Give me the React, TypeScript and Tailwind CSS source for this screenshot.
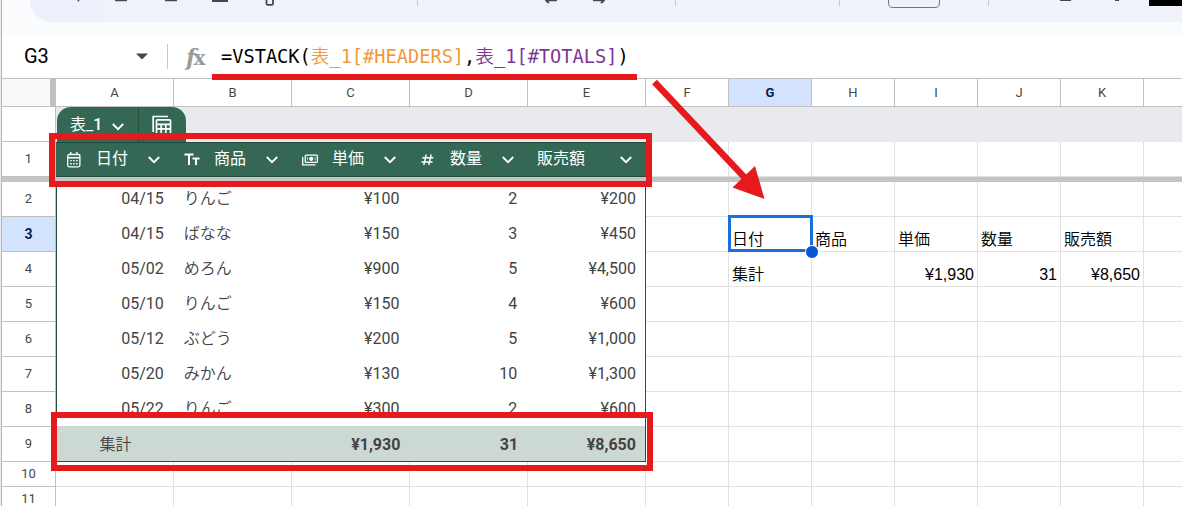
import type { ReactNode } from 'react'
import clsx from 'clsx'

type IconName = 'date' | 'text' | 'currency' | 'number'

interface HeaderColumn {
  label: string
  icon?: IconName
}

const tableHeaders: HeaderColumn[] = [
  { label: '日付', icon: 'date' },
  { label: '商品', icon: 'text' },
  { label: '単価', icon: 'currency' },
  { label: '数量', icon: 'number' },
  { label: '販売額' },
]

const tableRows = [
  ['04/15', 'りんご', '¥100', '2', '¥200'],
  ['04/15', 'ばなな', '¥150', '3', '¥450'],
  ['05/02', 'めろん', '¥900', '5', '¥4,500'],
  ['05/10', 'りんご', '¥150', '4', '¥600'],
  ['05/12', 'ぶどう', '¥200', '5', '¥1,000'],
  ['05/20', 'みかん', '¥130', '10', '¥1,300'],
  ['05/22', 'りんご', '¥300', '2', '¥600'],
]

const totals = ['集計', '', '¥1,930', '31', '¥8,650']

const wideColumns = ['A', 'B', 'C', 'D', 'E']
const narrowColumns = ['F', 'G', 'H', 'I', 'J', 'K']

// Spilled VSTACK result, keyed by row number, columns F to K
const results: Record<number, string[]> = {
  3: ['', '日付', '商品', '単価', '数量', '販売額'],
  4: ['', '集計', '', '¥1,930', '31', '¥8,650'],
}

function Chevron({ className }: { className?: string }) {
  return (
    <svg className={clsx('h-2 w-3 shrink-0', className)} viewBox="0 0 12 8" fill="none" stroke="currentColor" strokeWidth="1.8">
      <path d="M0.8 1L6 6.2L11.2 1" />
    </svg>
  )
}

function ColumnIcon({ name }: { name: IconName }) {
  if (name === 'date') {
    return (
      <svg className="h-4 w-[18px]" viewBox="0 0 18 16" fill="none" stroke="currentColor">
        <rect x="1.7" y="2.5" width="12.2" height="12.3" rx="1.5" strokeWidth="1.3" />
        <path d="M4.7 0V2.5M11 0V2.5M2 5.7H14" strokeWidth="1.4" />
        <path d="M4.2 8.6H12M4.2 11.7H12" strokeWidth="1.4" strokeDasharray="1.6 1.3" />
      </svg>
    )
  }
  if (name === 'text') {
    return (
      <svg className="h-4 w-[18px]" viewBox="0 0 18 16" fill="none" stroke="currentColor" strokeWidth="2">
        <path d="M0.5 2.5H9.5M5 2.5V13" />
        <path d="M8.5 6.5H15.5M12 6.5V13" />
      </svg>
    )
  }
  if (name === 'currency') {
    return (
      <svg className="h-4 w-[18px]" viewBox="0 0 18 16" fill="none" stroke="currentColor" strokeWidth="1.3">
        <rect x="3.2" y="3.2" width="12.2" height="7.2" rx="1" />
        <path d="M0.7 5V12.8H13.5" />
        <circle cx="9.3" cy="6.8" r="1.5" fill="currentColor" />
        <path d="M5.5 5V8.5M13.2 5V8.5" strokeWidth="0.7" />
      </svg>
    )
  }
  return (
    <svg className="h-4 w-[18px]" viewBox="0 0 18 16" fill="none" stroke="currentColor" strokeWidth="1.4">
      <path d="M6.2 2.5L3.8 13M11.2 2.5L8.8 13M2.4 5.7H13.4M1.5 10H12.5" />
    </svg>
  )
}

function Toolbar() {
  return (
    <div className="h-[34px] shrink-0 bg-[#f9fbfd] pl-[28px]">
      <div className="h-[22px] overflow-hidden rounded-bl-[22px] bg-[#eff3f9]">
        <svg className="h-[22px] w-[1152px]" viewBox="30 0 1152 22" fill="none" stroke="#444746" strokeWidth="1.8">
          <rect x="30" y="0" width="72" height="22" fill="#ebf0fa" stroke="none" />
          <path d="M78 0L79 1" />
          <path d="M115 0.4H127M165 0.4H177" />
          <rect x="212" y="0" width="16" height="2" fill="#444746" stroke="none" />
          <path d="M266.5 0V3.5Q266.5 4.8 268 4.8H271.5Q273 4.8 273 3.5V0" />
          <path d="M417.5 0V6M675.5 0V6M839.5 0V6M988.5 0V6" stroke="#c7c7c7" strokeWidth="1" />
          <path d="M545.5 0L549 3.2M547 0.3H557M604.5 0L601 3.2M603 0.3H593" />
          <path d="M888.5 0V3Q888.5 7.5 893 7.5H935Q939.5 7.5 939.5 3V0" stroke="#747775" strokeWidth="1" />
          <path d="M1060 0.2H1071M1115 0.2H1119" />
          <rect x="1149" y="0" width="33" height="6" fill="#000" stroke="none" />
        </svg>
      </div>
    </div>
  )
}

function FormulaBar() {
  return (
    <div className="flex h-[45px] shrink-0 items-center border-b border-[#c0c0c0] bg-white pl-[22px]">
      <span className="w-[111px] text-[20px] text-black">G3</span>
      <svg className="ml-[1px] h-[7px] w-3" viewBox="0 0 12 7" fill="#444746">
        <path d="M0 0.5H12L6 6.5Z" />
      </svg>
      <div className="ml-[19px] h-[25px] w-px bg-[#c7c7c7]" />
      <span className="mt-px ml-[18px] flex w-[34px] items-baseline font-['DejaVu_Serif'] leading-none text-[#9a9a9a]">
        <span className="text-[22px] font-bold italic">f</span>
        <span className="-ml-[2px] text-[20px] font-bold">x</span>
      </span>
      <span className="mt-px ml-px font-['DejaVu_Sans_Mono','Noto_Sans_CJK_JP',monospace] text-[18.65px] whitespace-pre text-black">
        =VSTACK(<span className="text-[#f09a38]"><span className="font-[350]">表</span>_1[#HEADERS]</span>,<span className="text-[#7e3794]"><span className="font-[350]">表</span>_1[#TOTALS]</span>)
      </span>
    </div>
  )
}

function ColumnHeaders() {
  return (
    <div className="flex h-7 shrink-0 border-b border-[#c0c0c0] text-[13px] text-[#444746]">
      <div className="w-[54px] border-r-[6px] border-[#c0c0c0] bg-[#f8f9fa]" />
      {wideColumns.map((name) => (
        <div key={name} className="flex w-[118px] items-center justify-center border-r border-[#c0c0c0]">{name}</div>
      ))}
      {narrowColumns.map((name) => (
        <div
          key={name}
          className={clsx(
            'flex w-[83px] items-center justify-center border-r border-[#c0c0c0]',
            name === 'G' && 'bg-[#d3e3fd] font-bold text-[#041e49]',
          )}
        >
          {name}
        </div>
      ))}
    </div>
  )
}

function RowNumber({ value, selected }: { value?: number; selected?: boolean }) {
  return (
    <div
      className={clsx(
        'flex w-[54px] shrink-0 items-center justify-center border-r border-b border-[#c0c0c0]',
        selected ? 'bg-[#d3e3fd] text-[14px] font-bold text-[#041e49]' : 'text-[13px] text-[#444746]',
      )}
    >
      {value}
    </div>
  )
}

function NarrowCells({ row }: { row: number }) {
  const values = results[row] ?? []
  return (
    <>
      {narrowColumns.map((name, i) => {
        const value = values[i]
        const numeric = value ? /\d/.test(value) : false
        return (
          <div
            key={name}
            className={clsx(
              "relative flex w-[83px] items-end border-r border-b border-[#e1e1e1] px-[3px] font-['Liberation_Sans','Noto_Sans_CJK_JP',sans-serif] text-[16px] leading-[22px] text-black",
              numeric ? 'justify-end' : 'font-[350]',
            )}
          >
            {value}
            {row === 3 && name === 'G' && (
              <>
                <div className="absolute -top-[2px] -left-[1px] h-[37px] w-[85px] border-[3px] border-[#1a6fdc]" />
                <div className="absolute -right-[8px] -bottom-[8px] z-10 size-[14px] rounded-full border border-white bg-[#0b57d0]" />
              </>
            )}
          </div>
        )
      })}
      <div className="flex-1 border-b border-[#e1e1e1]" />
    </>
  )
}

function TableTabRow() {
  return (
    <div className="flex h-[35px] shrink-0">
      <RowNumber />
      <div className="flex flex-1 bg-[#e8eaed] pl-px">
        <div className="flex w-[129px] rounded-t-[14px] bg-[#356854] text-white">
          <div className="flex w-[82px] items-center border-r border-[#28503f] pl-[13px] text-[16px]">
            <span className="w-[42px]">表_<span className="font-medium">1</span></span>
            <Chevron className="mt-1" />
          </div>
          <svg className="mt-[8px] ml-[13px] h-[22px] w-[20px]" viewBox="0 0 20 22" fill="none" stroke="currentColor" strokeWidth="1.7">
            <path d="M1.2 17V1.5H16" />
            <rect x="4.5" y="4.8" width="14" height="14" rx="1" />
            <path d="M4.5 9.3H18.5M4.5 13.8H18.5M9.2 9.3V19M13.8 9.3V19" />
          </svg>
        </div>
      </div>
    </div>
  )
}

function TableHeaderRow() {
  return (
    <div className="flex h-[35px] shrink-0">
      <RowNumber value={1} />
      <div className="flex w-[590px] border-y border-[#244a3b] bg-[#356854] text-[16px] text-white">
        {tableHeaders.map((col) => (
          <div key={col.label} className="flex w-[118px] items-center pr-[14px] pb-[2px] pl-[10px]">
            {col.icon && (
              <span className="mt-[3px] mr-3 w-[18px]">
                <ColumnIcon name={col.icon} />
              </span>
            )}
            <span className={clsx('flex-1', !col.icon && '-ml-px')}>{col.label}</span>
            <Chevron className="mt-[3px]" />
          </div>
        ))}
      </div>
      <NarrowCells row={1} />
    </div>
  )
}

function TableShell({ children, className }: { children: ReactNode; className?: string }) {
  return (
    <div className={clsx('flex w-[590px] shrink-0 border-x border-[#28503f] text-[16px] text-[#434343]', className)}>
      {children}
    </div>
  )
}

function DataRow({ values, row }: { values: string[]; row: number }) {
  return (
    <div className="flex h-[35px] shrink-0">
      <RowNumber value={row} selected={row === 3} />
      <TableShell>
        {values.map((value, i) => (
          <div
            key={i}
            className={clsx(
              'flex items-center pb-[2px]',
              i === 0 ? 'w-[117px]' : 'w-[118px]',
              i === 4 ? 'pr-[9px]' : 'pr-[10px]',
              i === 1 ? 'pl-[10px] font-[350]' : 'justify-end',
            )}
          >
            {value}
          </div>
        ))}
      </TableShell>
      <NarrowCells row={row} />
    </div>
  )
}

function TotalRow() {
  return (
    <div className="-mt-px flex h-[36px] shrink-0">
      <RowNumber value={9} />
      <TableShell className="border-b bg-[#ccd8d4]">
        {totals.map((value, i) => (
          <div
            key={i}
            className={clsx(
              'flex items-center pt-[2px]',
              i === 0 ? 'w-[117px] justify-center font-[350]' : 'w-[118px] justify-end pr-[9px] font-bold',
            )}
          >
            {value}
          </div>
        ))}
      </TableShell>
      <NarrowCells row={9} />
    </div>
  )
}

function EmptyRow({ row }: { row: number }) {
  return (
    <div className="flex h-[25px] shrink-0">
      <RowNumber value={row} />
      {wideColumns.map((name) => (
        <div key={name} className="w-[118px] border-r border-b border-[#e1e1e1]" />
      ))}
      <NarrowCells row={row} />
    </div>
  )
}

function Annotations() {
  return (
    <>
      <div className="absolute top-[74px] left-[212px] h-[6px] w-[425px] bg-[#e6191c]" />
      <div className="absolute top-[133px] left-[49px] h-[54px] w-[603px] border-[6px] border-[#e6191c]" />
      <div className="absolute top-[412px] left-[51px] h-[59px] w-[602px] border-[6px] border-[#e6191c]" />
      <svg className="absolute top-[78px] left-[648px] h-[124px] w-[120px]" viewBox="648 78 120 124">
        <path d="M654.5 82L746 179" stroke="#e6191c" strokeWidth="6.5" />
        <path d="M764.5 199L732.5 187.5L755 166Z" fill="#e6191c" />
      </svg>
    </>
  )
}

export default function App() {
  return (
    <div className="relative flex h-[506px] w-[1182px] overflow-hidden bg-white font-[Roboto,'Noto_Sans_CJK_JP',sans-serif]">
      <div className="w-[2px] shrink-0 border-r border-[#b5b5b5] bg-[#ececec]" />
      <div className="flex min-w-0 flex-1 flex-col">
        <Toolbar />
        <FormulaBar />
        <ColumnHeaders />
        <TableTabRow />
        <TableHeaderRow />
        {/* frozen row divider */}
        <div className="h-[5px] shrink-0 bg-[#c4c4c4]" />
        {tableRows.map((values, i) => (
          <DataRow key={i} values={values} row={i + 2} />
        ))}
        <TotalRow />
        <EmptyRow row={10} />
        <EmptyRow row={11} />
      </div>
      <Annotations />
    </div>
  )
}
